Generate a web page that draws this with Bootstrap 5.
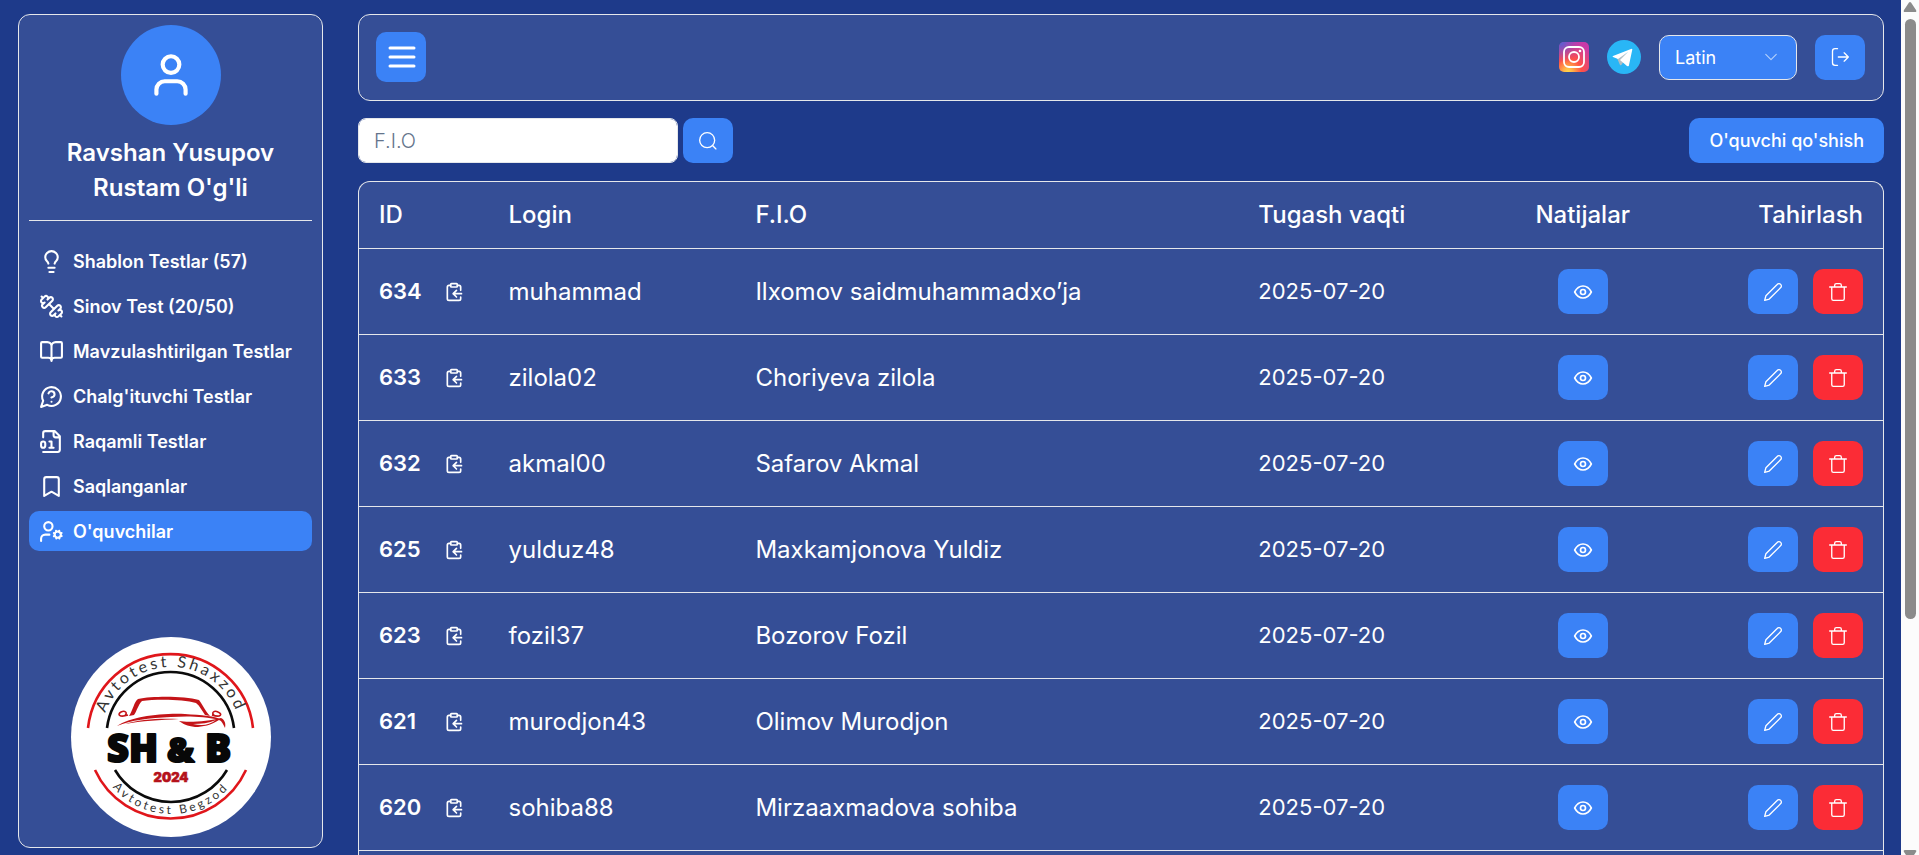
<!DOCTYPE html>
<html lang="uz">
<head>
<meta charset="utf-8">
<meta name="viewport" content="width=device-width, initial-scale=1">
<title>O'quvchilar</title>
<link href="https://cdn.jsdelivr.net/npm/bootstrap@5.3.0/dist/css/bootstrap.min.css" rel="stylesheet">
<style>
  :root { --page: #1e3a8a; --panel: #354e96; --line: #e5e7eb; --accent: #3b82f6; --danger: #fb2c36; }
  body { background: var(--page); color: #fff; font-family: Inter, "Liberation Sans", sans-serif; }
  .ico { fill: none; stroke: currentColor; stroke-width: 2; stroke-linecap: round; stroke-linejoin: round; flex: none; display: block; }
  .thin { stroke-width: 1.6; }
  .heavy { stroke-width: 3; }
  .panel { background: var(--panel); border: 1px solid var(--line); border-radius: 12px; }

  .side { width: 305px; margin: 14px 0 7px 18px; padding: 10px; }
  .avatar { width: 100px; height: 100px; background: var(--accent); }
  .person { font-size: 24px; line-height: 35px; font-weight: 600; border-bottom: 1px solid var(--line); padding: 10px 20px 15px; }
  .menu { gap: 5px; margin-top: 20px; }
  .menu .nav-link { height: 40px; padding: 0 10px; gap: 9px; border-radius: 10px; color: #fff; font-size: 18px; font-weight: 600; white-space: nowrap; }
  .menu .nav-link.active { background: var(--accent); }

  .content { padding: 14px 17px 0 35px; }
  .topbar { padding: 17px 18px 18px 17px; }
  .topbar-end { gap: 18px; }
  .act { width: 50px; height: 45px; padding: 0; border: 0; border-radius: 10px; background: var(--accent); color: #fff; display: inline-flex; align-items: center; justify-content: center; }
  .act:hover { background: #2563eb; color: #fff; }
  .act-menu { height: 50px; }
  .act-del, .act-del:hover { background: var(--danger); }
  .act-add { width: auto; padding: 0 20px; font-size: 18px; font-weight: 500; }
  .lang { width: 138px; height: 45px; border: 1px solid var(--line); border-radius: 10px; background-color: var(--accent); color: #fff; font-size: 18px; padding: 0 40px 0 15px;
    background-image: url("data:image/svg+xml,%3csvg xmlns='http://www.w3.org/2000/svg' viewBox='0 0 16 16'%3e%3cpath fill='none' stroke='%23b4d0fb' stroke-width='1.3' stroke-linecap='round' stroke-linejoin='round' d='m2 5 6 6 6-6'/%3e%3c/svg%3e"); background-position: right 18px center; background-size: 14px 14px; }
  .filters { margin: 17px 0 18px; }
  .search { gap: 5px; }
  .find { width: 320px; height: 45px; border: 1px solid var(--line); border-radius: 8px; padding: 0 15px; font-size: 20px; font-weight: 300; }
  .find::placeholder { color: #64748b; opacity: 1; }

  .list { border-bottom: 0; border-radius: 12px 12px 0 0; overflow: hidden; }
  .people { --bs-table-bg: transparent; --bs-table-color: #fff; color: #fff; border-color: var(--line); table-layout: fixed; font-size: 24px; line-height: 25px; white-space: nowrap; }
  .people th, .people td { padding: 20px; }
  .people thead th { font-weight: 500; line-height: 26px; }
  .people .num { font-size: 22px; font-weight: 600; width: 65px; }
  .people .date { font-size: 22px; }
  .people .tools { display: flex; justify-content: flex-end; gap: 15px; }

  .rail { width: 18px; background: #fcfcfc; }
  .rail .thumb { width: 11px; height: 600px; border-radius: 6px; background: #8b8b8b; }
</style>
</head>
<body>
<svg width="0" height="0" class="position-absolute" aria-hidden="true">
  <symbol id="copy" viewBox="0 0 24 24"><rect width="8" height="4" x="8" y="2" rx="1"/><path d="M8 4H6a2 2 0 0 0-2 2v14a2 2 0 0 0 2 2h12a2 2 0 0 0 2-2v-2M16 4h2a2 2 0 0 1 2 2v4M21 14H11M15 10l-4 4 4 4"/></symbol>
  <symbol id="eye" viewBox="0 0 24 24"><path d="M2 12c2.500-4.800 5.800-7.200 10-7.200s7.500 2.400 10 7.200c-2.500 4.800-5.800 7.200-10 7.200S4.500 16.800 2 12Z"/><circle cx="12" cy="12" r="3"/></symbol>
  <symbol id="pen" viewBox="0 0 24 24"><path d="M17 3a2.850 2.830 0 1 1 4 4L7.500 20.500 2 22l1.500-5.500Z"/></symbol>
  <symbol id="bin" viewBox="0 0 24 24"><path d="M2 6h20M4.500 6v14a2 2 0 0 0 2 2h11a2 2 0 0 0 2-2V6M8 6V4a2 2 0 0 1 2-2h4a2 2 0 0 1 2 2v2"/></symbol>
</svg>

<div class="d-flex vh-100 overflow-hidden">
  <aside class="side panel d-flex flex-column flex-shrink-0">
    <div class="avatar rounded-circle d-flex align-items-center justify-content-center mx-auto">
      <svg class="ico" width="50" height="50" viewBox="0 0 24 24"><path d="M19 21v-2a4 4 0 0 0-4-4H9a4 4 0 0 0-4 4v2"/><circle cx="12" cy="7" r="4"/></svg>
    </div>
    <div class="person text-center">Ravshan Yusupov Rustam O'g'li</div>
    <nav class="menu nav flex-column">
      <a class="nav-link d-flex align-items-center" href="#"><svg class="ico" width="25" height="25" viewBox="0 0 24 24"><path d="M15 14c.2-1 .7-1.700 1.500-2.500 1-.9 1.500-2.200 1.500-3.500A6 6 0 0 0 6 8c0 1 .2 2.200 1.500 3.500.7.7 1.300 1.500 1.500 2.500M9 18h6M10 22h4"/></svg>Shablon Testlar (57)</a>
      <a class="nav-link d-flex align-items-center" href="#"><svg class="ico" width="25" height="25" viewBox="0 0 24 24"><path d="M14.400 14.400 9.600 9.600M18.657 21.485a2 2 0 1 1-2.829-2.828l-1.767 1.768a2 2 0 1 1-2.829-2.829l6.364-6.364a2 2 0 1 1 2.829 2.829l-1.768 1.767a2 2 0 1 1 2.828 2.829zM21.500 21.500l-1.400-1.400M3.900 3.900 2.500 2.500M6.404 12.768a2 2 0 1 1-2.829-2.829l1.768-1.767a2 2 0 1 1-2.828-2.829l2.828-2.828a2 2 0 1 1 2.829 2.828l1.767-1.768a2 2 0 1 1 2.829 2.829z"/></svg>Sinov Test (20/50)</a>
      <a class="nav-link d-flex align-items-center" href="#"><svg class="ico" width="25" height="25" viewBox="0 0 24 24"><path d="M12 7v14M3 18a1 1 0 0 1-1-1V4a1 1 0 0 1 1-1h5a4 4 0 0 1 4 4 4 4 0 0 1 4-4h5a1 1 0 0 1 1 1v13a1 1 0 0 1-1 1h-6a3 3 0 0 0-3 3 3 3 0 0 0-3-3z"/></svg>Mavzulashtirilgan Testlar</a>
      <a class="nav-link d-flex align-items-center" href="#"><svg class="ico" width="25" height="25" viewBox="0 0 24 24"><path d="M7.900 20A9 9 0 1 0 4 16.100L2 22ZM9.090 9a3 3 0 0 1 5.830 1c0 2-3 3-3 3M12 17h.01"/></svg>Chalg'ituvchi Testlar</a>
      <a class="nav-link d-flex align-items-center" href="#"><svg class="ico" width="25" height="25" viewBox="0 0 24 24"><path d="M4 22h14a2 2 0 0 0 2-2V7l-5-5H6a2 2 0 0 0-2 2v4M14 2v4a2 2 0 0 0 2 2h4M10 12h2v6M10 18h4"/><rect x="2" y="12" width="4" height="6" rx="2"/></svg>Raqamli Testlar</a>
      <a class="nav-link d-flex align-items-center" href="#"><svg class="ico" width="25" height="25" viewBox="0 0 24 24"><path d="m19 21-7-4-7 4V5a2 2 0 0 1 2-2h10a2 2 0 0 1 2 2v16z"/></svg>Saqlanganlar</a>
      <a class="nav-link active d-flex align-items-center" href="#" aria-current="page"><svg class="ico" width="25" height="25" viewBox="0 0 24 24"><circle cx="18" cy="15" r="3"/><circle cx="9" cy="7" r="4"/><path d="M10 15H6a4 4 0 0 0-4 4v2M21.700 16.400l-.9-.3M15.200 13.900l-.9-.3M16.600 18.700l.3-.9M19.100 12.200l.3-.9M19.600 18.700l-.4-1M16.800 12.300l-.4-1M14.300 16.600l1-.4M20.700 13.800l1-.4"/></svg>O'quvchilar</a>
    </nav>
    <svg class="mt-auto mx-auto d-block flex-shrink-0" width="200" height="200" viewBox="0 0 200 200" role="img" aria-label="Avtotest logo">
      <defs>
        <path id="arcTop" d="M30 100A70 70 0 0 1 170 100"/>
        <path id="arcLow" d="M23 100A77 77 0 0 0 177 100"/>
      </defs>
      <circle cx="100" cy="100" r="100" fill="#fff"/>
      <g fill="none" stroke-width="2.600">
        <path stroke="#e0161b" d="M17 91A83 83 0 0 1 182 91M24 133A83 83 0 0 0 175 133"/>
        <path stroke="#0b0b0b" d="M36 91A64 64 0 0 1 163 91M44 133A65 65 0 0 0 156 133"/>
      </g>
      <g fill="#333" font-family="Lato, sans-serif" text-anchor="middle">
        <text font-size="16" letter-spacing="3"><textPath href="#arcTop" startOffset="50%">Avtotest Shaxzod</textPath></text>
        <text font-size="12" letter-spacing="3"><textPath href="#arcLow" startOffset="50%">Avtotest Begzod</textPath></text>
      </g>
      <!-- car outline -->
      <g fill="#c41418">
        <path d="M58 79C62 73 63 65 67 62C82 59 113 59 128 63C132 68 134 74 139 79L134 78C131 74 129 69 125 66C112 62 84 62 71 64C67 68 66 74 63 78Z"/>
        <path d="M46 89C60 80 88 76 114 77C130 78 145 79 151 83C130 79 116 79 100 80C78 81 60 83 46 89Z"/>
        <path d="M54 87C68 82 90 81 108 82C90 83 70 84 54 87Z"/>
        <path d="M108 84C118 86 138 84 150 81C154 83 155 87 154 91C152 87 151 84 148 83C140 88 132 90 124 90C116 89 112 87 108 84Z"/>
      </g>
      <path fill="#fff" d="M122 87C130 87 138 86 145 83C138 88 132 89 122 87Z"/>
      <g fill="none" stroke="#c41418" stroke-width="1.600"><path d="M57 78C48 81 46 77 50 75C54 73 57 76 54 78M141 78C150 81 152 77 147 75C143 73 140 76 143 78"/></g>
      <g fill="#080808" stroke="#080808" stroke-width="2" stroke-linejoin="round" font-family="'Open Sans', sans-serif" font-weight="800" font-size="39">
        <text x="36" y="125" font-size="38">SH</text>
        <text x="96" y="125" font-size="34">&amp;</text>
        <text x="134" y="125">B</text>
      </g>
      <text x="100" y="145" text-anchor="middle" fill="#b5121b" stroke="#b5121b" stroke-width=".6" font-family="Inter, sans-serif" font-size="13" font-weight="900">2024</text>
    </svg>
  </aside>

  <main class="content flex-grow-1 d-flex flex-column">
    <header class="topbar panel d-flex align-items-center justify-content-between">
      <button class="act act-menu" type="button" aria-label="Menyu"><svg class="ico heavy" width="30" height="30" viewBox="0 0 30 30"><path d="M4 6h24M4 15h24M4 24h24"/></svg></button>
      <div class="topbar-end d-flex align-items-center">
        <a href="#" aria-label="Instagram">
          <svg class="d-block" width="30" height="30" viewBox="0 0 30 30">
            <defs>
              <radialGradient id="igw" cx=".3" cy="1" r="1"><stop offset="0" stop-color="#ffd94a"/><stop offset=".15" stop-color="#ffb347"/><stop offset=".45" stop-color="#ff5145"/><stop offset="1" stop-color="#c93aa8"/></radialGradient>
              <radialGradient id="igc" cx=".05" cy="0" r=".7"><stop offset="0" stop-color="#4c66d6"/><stop offset="1" stop-color="#9b3fc4" stop-opacity="0"/></radialGradient>
            </defs>
            <rect width="30" height="30" rx="5" fill="url(#igw)"/><rect width="30" height="30" rx="5" fill="url(#igc)"/>
            <g fill="none" stroke="#fff" stroke-width="1.800"><rect x="5" y="5" width="20" height="20" rx="5"/><circle cx="15" cy="15" r="5"/></g><circle cx="21" cy="9" r="1.300" fill="#fff"/>
          </svg>
        </a>
        <a href="#" aria-label="Telegram">
          <svg class="d-block" width="34" height="34" viewBox="0 0 34 34"><circle cx="17" cy="17" r="17" fill="#29b6f6"/><path fill="#b0bec5" d="m10 18 3 7q1 1 2-1l3-4 4-8Z"/><path fill="#fff" d="M6 16 24 9q2-1 1 2l-3 14q0 2-2 1l-7-6 8-8-10 7-5-2q-1-1 0-1Z"/></svg>
        </a>
        <select class="lang form-select" aria-label="Til"><option>Latin</option></select>
        <button class="act" type="button" aria-label="Chiqish"><svg class="ico thin" width="20" height="20" viewBox="0 0 24 24"><path d="M9 2H6a3 3 0 0 0-3 3v14a3 3 0 0 0 3 3h3M10 12h12M17 7l5 5-5 5"/></svg></button>
      </div>
    </header>

    <div class="filters d-flex align-items-center">
      <form class="search d-flex" role="search">
        <input class="find form-control" type="text" placeholder="F.I.O" aria-label="F.I.O">
        <button class="act flex-shrink-0" type="button" aria-label="Qidirish"><svg class="ico thin" width="20" height="20" viewBox="0 0 24 24"><circle cx="11" cy="11" r="9"/><path d="m21.500 21.500-4-4"/></svg></button>
      </form>
      <button class="act act-add ms-auto" type="button">O'quvchi qo'shish</button>
    </div>

    <section class="list panel flex-grow-1">
      <table class="people table align-middle mb-0">
        <colgroup><col style="width:8.5%"><col style="width:16.2%"><col style="width:33%"><col style="width:18%"><col style="width:9.2%"><col></colgroup>
        <thead><tr><th scope="col">ID</th><th scope="col">Login</th><th scope="col">F.I.O</th><th scope="col">Tugash vaqti</th><th scope="col" class="text-center">Natijalar</th><th scope="col" class="text-end">Tahirlash</th></tr></thead>
        <tbody>
          <tr><td><div class="d-flex align-items-center"><span class="num">634</span><svg class="ico" width="20" height="20"><use href="#copy"/></svg></div></td><td>muhammad</td><td>Ilxomov saidmuhammadxo’ja</td><td class="date">2025-07-20</td><td class="text-center"><button class="act align-middle" type="button" aria-label="Ko'rish"><svg class="ico" width="20" height="20"><use href="#eye"/></svg></button></td><td><div class="tools"><button class="act" type="button" aria-label="Tahrirlash"><svg class="ico thin" width="20" height="20"><use href="#pen"/></svg></button><button class="act act-del" type="button" aria-label="O'chirish"><svg class="ico thin" width="20" height="20"><use href="#bin"/></svg></button></div></td></tr>
          <tr><td><div class="d-flex align-items-center"><span class="num">633</span><svg class="ico" width="20" height="20"><use href="#copy"/></svg></div></td><td>zilola02</td><td>Choriyeva zilola</td><td class="date">2025-07-20</td><td class="text-center"><button class="act align-middle" type="button" aria-label="Ko'rish"><svg class="ico" width="20" height="20"><use href="#eye"/></svg></button></td><td><div class="tools"><button class="act" type="button" aria-label="Tahrirlash"><svg class="ico thin" width="20" height="20"><use href="#pen"/></svg></button><button class="act act-del" type="button" aria-label="O'chirish"><svg class="ico thin" width="20" height="20"><use href="#bin"/></svg></button></div></td></tr>
          <tr><td><div class="d-flex align-items-center"><span class="num">632</span><svg class="ico" width="20" height="20"><use href="#copy"/></svg></div></td><td>akmal00</td><td>Safarov Akmal</td><td class="date">2025-07-20</td><td class="text-center"><button class="act align-middle" type="button" aria-label="Ko'rish"><svg class="ico" width="20" height="20"><use href="#eye"/></svg></button></td><td><div class="tools"><button class="act" type="button" aria-label="Tahrirlash"><svg class="ico thin" width="20" height="20"><use href="#pen"/></svg></button><button class="act act-del" type="button" aria-label="O'chirish"><svg class="ico thin" width="20" height="20"><use href="#bin"/></svg></button></div></td></tr>
          <tr><td><div class="d-flex align-items-center"><span class="num">625</span><svg class="ico" width="20" height="20"><use href="#copy"/></svg></div></td><td>yulduz48</td><td>Maxkamjonova Yuldiz</td><td class="date">2025-07-20</td><td class="text-center"><button class="act align-middle" type="button" aria-label="Ko'rish"><svg class="ico" width="20" height="20"><use href="#eye"/></svg></button></td><td><div class="tools"><button class="act" type="button" aria-label="Tahrirlash"><svg class="ico thin" width="20" height="20"><use href="#pen"/></svg></button><button class="act act-del" type="button" aria-label="O'chirish"><svg class="ico thin" width="20" height="20"><use href="#bin"/></svg></button></div></td></tr>
          <tr><td><div class="d-flex align-items-center"><span class="num">623</span><svg class="ico" width="20" height="20"><use href="#copy"/></svg></div></td><td>fozil37</td><td>Bozorov Fozil</td><td class="date">2025-07-20</td><td class="text-center"><button class="act align-middle" type="button" aria-label="Ko'rish"><svg class="ico" width="20" height="20"><use href="#eye"/></svg></button></td><td><div class="tools"><button class="act" type="button" aria-label="Tahrirlash"><svg class="ico thin" width="20" height="20"><use href="#pen"/></svg></button><button class="act act-del" type="button" aria-label="O'chirish"><svg class="ico thin" width="20" height="20"><use href="#bin"/></svg></button></div></td></tr>
          <tr><td><div class="d-flex align-items-center"><span class="num">621</span><svg class="ico" width="20" height="20"><use href="#copy"/></svg></div></td><td>murodjon43</td><td>Olimov Murodjon</td><td class="date">2025-07-20</td><td class="text-center"><button class="act align-middle" type="button" aria-label="Ko'rish"><svg class="ico" width="20" height="20"><use href="#eye"/></svg></button></td><td><div class="tools"><button class="act" type="button" aria-label="Tahrirlash"><svg class="ico thin" width="20" height="20"><use href="#pen"/></svg></button><button class="act act-del" type="button" aria-label="O'chirish"><svg class="ico thin" width="20" height="20"><use href="#bin"/></svg></button></div></td></tr>
          <tr><td><div class="d-flex align-items-center"><span class="num">620</span><svg class="ico" width="20" height="20"><use href="#copy"/></svg></div></td><td>sohiba88</td><td>Mirzaaxmadova sohiba</td><td class="date">2025-07-20</td><td class="text-center"><button class="act align-middle" type="button" aria-label="Ko'rish"><svg class="ico" width="20" height="20"><use href="#eye"/></svg></button></td><td><div class="tools"><button class="act" type="button" aria-label="Tahrirlash"><svg class="ico thin" width="20" height="20"><use href="#pen"/></svg></button><button class="act act-del" type="button" aria-label="O'chirish"><svg class="ico thin" width="20" height="20"><use href="#bin"/></svg></button></div></td></tr>
        </tbody>
      </table>
    </section>
  </main>

  <div class="rail d-flex flex-column align-items-center flex-shrink-0" aria-hidden="true">
    <svg class="d-block flex-shrink-0" width="18" height="19" viewBox="0 0 18 19"><path d="M9 2q1 0 2 2l4 6q1 2-1 2H4q-2 0-1-2l4-6q1-2 2-2Z" fill="#8b8b8b"/></svg>
    <div class="thumb"></div>
    <svg class="d-block flex-shrink-0 mt-auto" width="18" height="5" viewBox="0 0 18 5"><path d="M4 0h10q2 0 1 2l-2 3H5L3 2Q2 0 4 0Z" fill="#8b8b8b"/></svg>
  </div>
</div>
<script src="https://cdn.jsdelivr.net/npm/bootstrap@5.3.0/dist/js/bootstrap.bundle.min.js"></script>
</body>
</html>
